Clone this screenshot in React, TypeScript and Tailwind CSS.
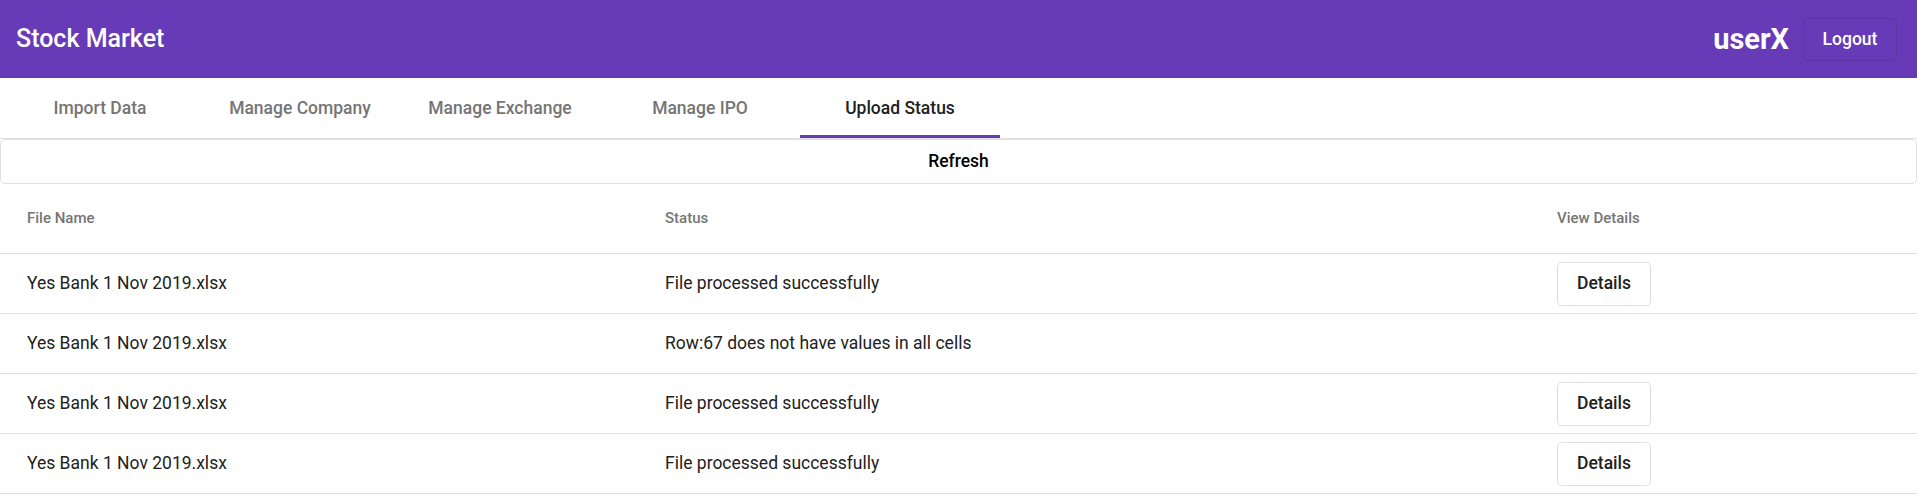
import React from 'react';

type Upload = {
  fileName: string;
  status: string;
  hasDetails: boolean;
};

const tabs = ['Import Data', 'Manage Company', 'Manage Exchange', 'Manage IPO', 'Upload Status'];

const uploads: Upload[] = [
  { fileName: 'Yes Bank 1 Nov 2019.xlsx', status: 'File processed successfully', hasDetails: true },
  { fileName: 'Yes Bank 1 Nov 2019.xlsx', status: 'Row:67 does not have values in all cells', hasDetails: false },
  { fileName: 'Yes Bank 1 Nov 2019.xlsx', status: 'File processed successfully', hasDetails: true },
  { fileName: 'Yes Bank 1 Nov 2019.xlsx', status: 'File processed successfully', hasDetails: true },
];

export default function App() {
  return (
    <div className="min-h-screen bg-white font-['Roboto',sans-serif] text-[#212121]">
      <header className="flex h-[78px] items-center justify-between bg-[#673ab7] pl-4 pr-5 text-white">
        <h1 className="text-[25px] font-medium">Stock Market</h1>
        <div className="flex items-center gap-[14px]">
          <span className="text-[29px] font-bold leading-none">userX</span>
          <button className="h-[43px] w-[94px] rounded-[5px] border border-black/10 text-[17.5px] font-medium">
            Logout
          </button>
        </div>
      </header>

      <nav className="flex border-b border-[#e0e0e0]">
        {tabs.map((tab) => {
          const active = tab === 'Upload Status';
          return (
            <div
              key={tab}
              className={
                active
                  ? 'relative flex h-[60px] w-[200px] items-center justify-center text-[17.5px] font-medium text-[#212121]'
                  : 'relative flex h-[60px] w-[200px] items-center justify-center text-[17.5px] font-medium text-[#757575]'
              }
            >
              {tab}
              {active && <div className="absolute inset-x-0 bottom-0 h-[3px] bg-[#673ab7]" />}
            </div>
          );
        })}
      </nav>

      <button className="flex h-[45px] w-full items-center justify-center rounded-[5px] border border-[#e0e0e0] text-[17.5px] font-medium text-black">
        Refresh
      </button>

      <div className="grid grid-cols-[665px_892px_1fr]">
        <div className="flex h-[70px] items-center border-b border-[#e0e0e0] pl-[27px] text-[15px] font-medium text-[#757575]">
          File Name
        </div>
        <div className="flex h-[70px] items-center border-b border-[#e0e0e0] text-[15px] font-medium text-[#757575]">
          Status
        </div>
        <div className="flex h-[70px] items-center border-b border-[#e0e0e0] text-[15px] font-medium text-[#757575]">
          View Details
        </div>

        {uploads.map((item, index) => (
          <React.Fragment key={index}>
            <div className="flex h-[60px] items-center border-b border-[#e0e0e0] pl-[27px] text-[17.5px]">
              {item.fileName}
            </div>
            <div className="flex h-[60px] items-center border-b border-[#e0e0e0] text-[17.5px]">{item.status}</div>
            <div className="flex h-[60px] items-center border-b border-[#e0e0e0]">
              {item.hasDetails && (
                <button className="h-[44px] w-[94px] rounded-[5px] border border-[#e0e0e0] bg-white text-[17.5px] font-medium text-[#212121]">
                  Details
                </button>
              )}
            </div>
          </React.Fragment>
        ))}
      </div>
    </div>
  );
}
